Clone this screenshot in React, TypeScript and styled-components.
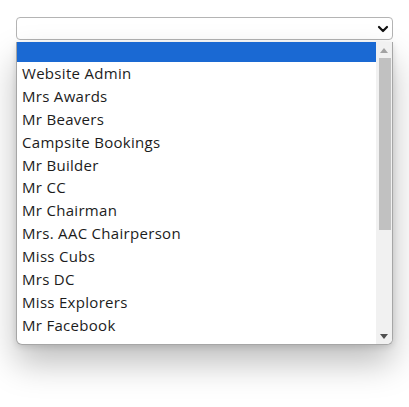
import React from "react";
import styled, { createGlobalStyle } from "styled-components";

const Global = createGlobalStyle`
  html, body { margin: 0; padding: 0; background: #ffffff; }
  body { font-family: "Open Sans", Lato, sans-serif; }
`;

const Page = styled.div`
  width: 409px;
  height: 407px;
  padding: 17px 0 0 16px;
  box-sizing: border-box;
  display: flex;
  flex-direction: column;
  gap: 2px;
`;

const SelectBox = styled.div`
  width: 377px;
  height: 23px;
  box-sizing: border-box;
  border: 1px solid #b4b4b4;
  border-radius: 4px;
  background: #ffffff;
  display: flex;
  align-items: center;
  justify-content: flex-end;
  padding-right: 3px;
`;

const Panel = styled.div`
  width: 377px;
  height: 303px;
  box-sizing: border-box;
  border: 1px solid #a6a6a6;
  border-top: none;
  border-radius: 0 0 6px 6px;
  background: #ffffff;
  display: flex;
  overflow: hidden;
  box-shadow: 0 18px 34px rgba(0, 0, 0, 0.26), 0 2px 6px rgba(0, 0, 0, 0.12);
`;

const List = styled.div`
  flex: 1;
  display: flex;
  flex-direction: column;
`;

const Option = styled.div<{ $selected?: boolean; $blank?: boolean }>`
  height: ${(p) => (p.$blank ? "20px" : "22.9px")};
  flex: none;
  box-sizing: border-box;
  padding-left: 5px;
  padding-bottom: 1px;
  display: flex;
  align-items: center;
  font-size: 15px;
  letter-spacing: 0.3px;
  color: #1c1c1c;
  background: ${(p) => (p.$selected ? "#1a69d3" : "transparent")};
`;

const Scrollbar = styled.div`
  width: 16px;
  flex: none;
  background: #f1f1f1;
  display: flex;
  flex-direction: column;
  align-items: center;
`;

const Arrow = styled.div`
  height: 16px;
  flex: none;
  display: flex;
  align-items: center;
  justify-content: center;
`;

const Thumb = styled.div`
  width: 12px;
  height: 172px;
  flex: none;
  background: #c1c1c1;
  margin-left: 1px;
`;

const Spacer = styled.div`
  flex: 1;
`;

const options = [
  "Website Admin",
  "Mrs Awards",
  "Mr Beavers",
  "Campsite Bookings",
  "Mr Builder",
  "Mr CC",
  "Mr Chairman",
  "Mrs. AAC Chairperson",
  "Miss Cubs",
  "Mrs DC",
  "Miss Explorers",
  "Mr Facebook",
];

export default function App() {
  return (
    <>
      <Global />
      <Page>
        <SelectBox>
          <svg width="12" height="8" viewBox="0 0 12 8">
            <path d="M2 2 L6 6 L10 2" fill="none" stroke="#111" strokeWidth="2.2" strokeLinecap="round" strokeLinejoin="round" />
          </svg>
        </SelectBox>
        <Panel>
          <List>
            <Option $selected $blank />
            {options.map((o) => (
              <Option key={o}>{o}</Option>
            ))}
          </List>
          <Scrollbar>
            <Arrow>
              <svg width="8" height="5" viewBox="0 0 8 5">
                <path d="M0 5 L4 0 L8 5 Z" fill="#a3a3a3" />
              </svg>
            </Arrow>
            <Thumb />
            <Spacer />
            <Arrow>
              <svg width="8" height="5" viewBox="0 0 8 5">
                <path d="M0 0 L8 0 L4 5 Z" fill="#505050" />
              </svg>
            </Arrow>
          </Scrollbar>
        </Panel>
      </Page>
    </>
  );
}
